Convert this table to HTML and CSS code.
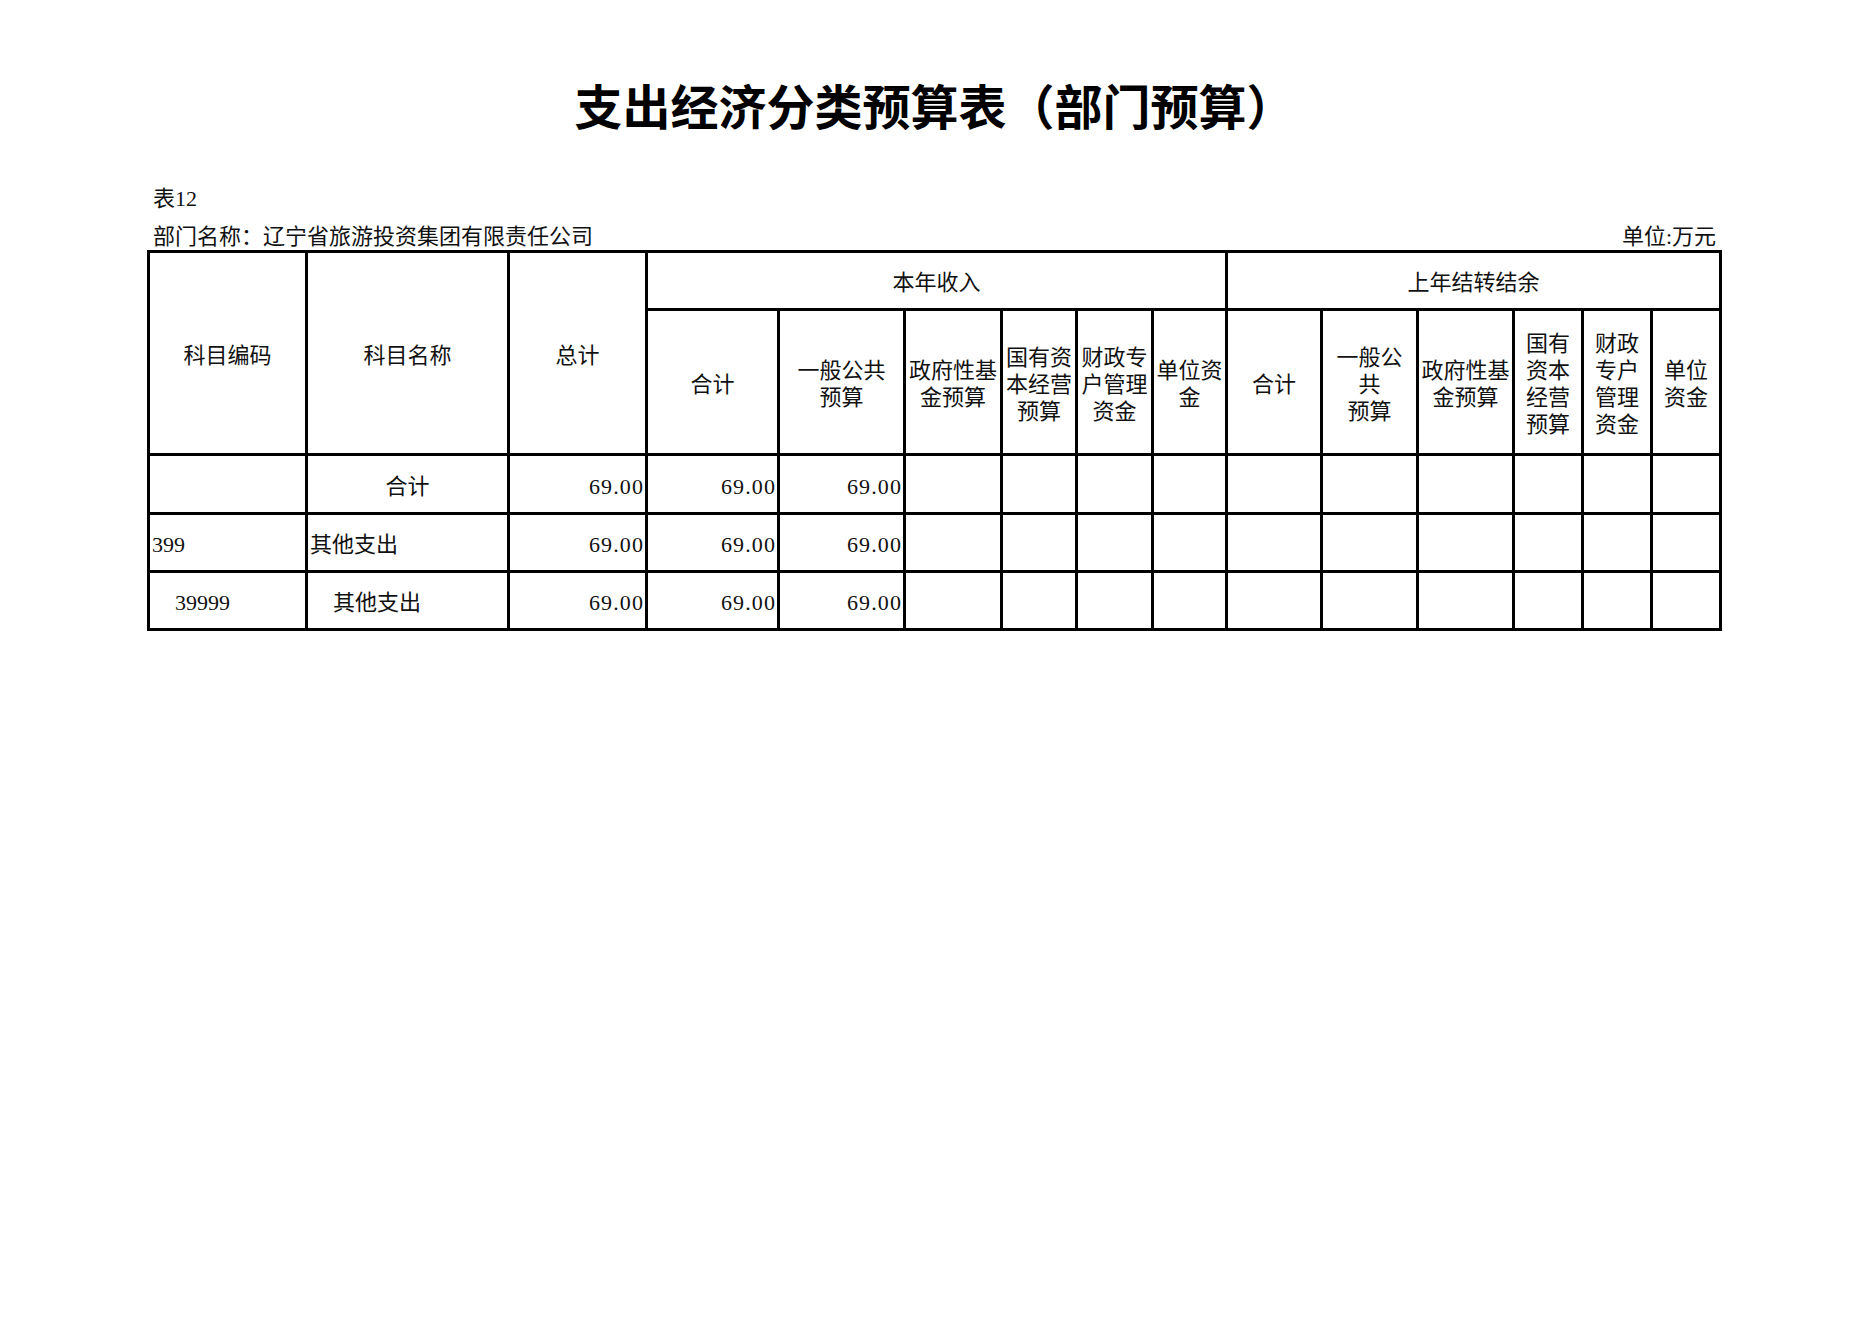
FILE: index.html
```html
<!DOCTYPE html>
<html lang="zh-CN">
<head>
<meta charset="utf-8">
<title>支出经济分类预算表（部门预算）</title>
<link rel="stylesheet" href="styles.css">
</head>
<body>
<div class="page">
  <h1 class="title">支出经济分类预算表（部门预算）</h1>
  <div class="tabno">表12</div>
  <div class="meta">
    <span class="dept">部门名称：辽宁省旅游投资集团有限责任公司</span>
    <span class="unit">单位:万元</span>
  </div>
  <table class="budget">
    <colgroup>
      <col class="c158"><col class="c202"><col class="c138">
      <col class="c132"><col class="c126"><col class="c97"><col class="c75"><col class="c76"><col class="c74">
      <col class="c95"><col class="c96"><col class="c96"><col class="c69"><col class="c69"><col class="c69">
    </colgroup>
    <thead>
      <tr class="h1">
        <th rowspan="2">科目编码</th>
        <th rowspan="2">科目名称</th>
        <th rowspan="2">总计</th>
        <th colspan="6" class="grp">本年收入</th>
        <th colspan="6" class="grp">上年结转结余</th>
      </tr>
      <tr class="h2">
        <th>合计</th>
        <th>一般公共<br>预算</th>
        <th>政府性基<br>金预算</th>
        <th>国有资<br>本经营<br>预算</th>
        <th>财政专<br>户管理<br>资金</th>
        <th>单位资<br>金</th>
        <th>合计</th>
        <th>一般公<br>共<br>预算</th>
        <th>政府性基<br>金预算</th>
        <th>国有<br>资本<br>经营<br>预算</th>
        <th>财政<br>专户<br>管理<br>资金</th>
        <th>单位<br>资金</th>
      </tr>
    </thead>
    <tbody>
      <tr class="r1">
        <td></td>
        <td class="center">合计</td>
        <td class="num">69.00</td>
        <td class="num">69.00</td>
        <td class="num">69.00</td>
        <td></td><td></td><td></td><td></td>
        <td></td><td></td><td></td><td></td><td></td><td></td>
      </tr>
      <tr class="r2">
        <td class="left">399</td>
        <td class="left">其他支出</td>
        <td class="num">69.00</td>
        <td class="num">69.00</td>
        <td class="num">69.00</td>
        <td></td><td></td><td></td><td></td>
        <td></td><td></td><td></td><td></td><td></td><td></td>
      </tr>
      <tr class="r3">
        <td class="left indent">39999</td>
        <td class="left indent">其他支出</td>
        <td class="num">69.00</td>
        <td class="num">69.00</td>
        <td class="num">69.00</td>
        <td></td><td></td><td></td><td></td>
        <td></td><td></td><td></td><td></td><td></td><td></td>
      </tr>
    </tbody>
  </table>
</div>
</body>
</html>
```

FILE: styles.css
```css
html, body {
  margin: 0;
  padding: 0;
  background: #fff;
}

body {
  color: #111;
  font-family: "Liberation Serif", "Noto Sans CJK SC", serif;
  font-size: 22px;
}

.page {
  width: 1575px;
  margin-left: 147px;
  padding-top: 74px;
}

.title {
  margin: 0;
  height: 60px;
  line-height: 60px;
  text-align: center;
  font-family: "Noto Sans CJK SC", sans-serif;
  font-size: 48px;
  font-weight: 700;
  color: #000;
}

.tabno {
  margin-top: 49px;
  padding-left: 6px;
  height: 32px;
  line-height: 32px;
}

.meta {
  display: flex;
  justify-content: space-between;
  padding: 10px 6px 0;
  height: 24px;
  line-height: 24px;
  margin-bottom: 1px;
}

.budget {
  border-collapse: collapse;
  table-layout: fixed;
  width: 1575px;
  font-family: "Liberation Serif", "Noto Sans CJK SC", serif;
  font-size: 22px;
}

.budget th,
.budget td {
  border: 3px solid #000;
  padding: 4px 2px 0;
  overflow: hidden;
  white-space: nowrap;
}

.budget th {
  font-weight: 400;
  text-align: center;
  vertical-align: middle;
  line-height: 27px;
}

.c158 { width: 158px; }
.c202 { width: 202px; }
.c138 { width: 138px; }
.c132 { width: 132px; }
.c126 { width: 126px; }
.c97 { width: 97px; }
.c75 { width: 75px; }
.c76 { width: 76px; }
.c74 { width: 74px; }
.c95 { width: 95px; }
.c96 { width: 96px; }
.c69 { width: 69px; }

.h1 { height: 58px; }
.h2 { height: 145px; }
.r1 { height: 59px; }
.r2 { height: 58px; }
.r3 { height: 58px; }

.budget td {
  vertical-align: middle;
  line-height: 27px;
}

.budget .center { text-align: center; }
.budget .left { text-align: left; }
.budget .indent { padding-left: 25px; }

.budget .num {
  text-align: right;
  letter-spacing: 1.1px;
  padding-right: 1px;
}
```
